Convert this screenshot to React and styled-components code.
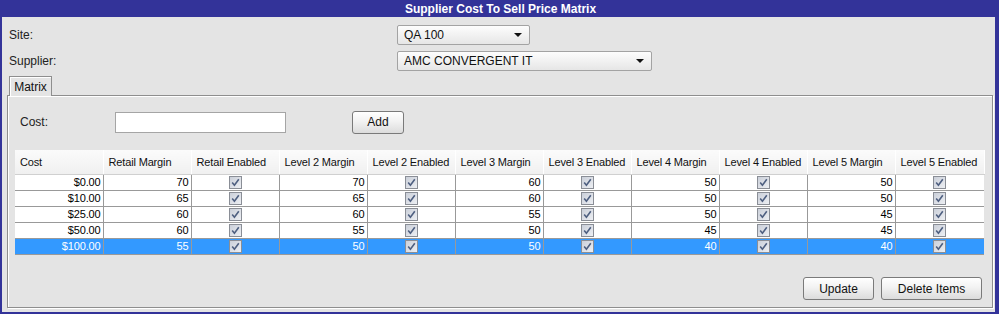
import React from "react";
import styled, { createGlobalStyle } from "styled-components";

const Global = createGlobalStyle`
  html, body { margin: 0; padding: 0; background: #e4e4e4; }
  * { box-sizing: border-box; }
`;

const Frame = styled.div`
  width: 999px;
  height: 314px;
  display: flex;
  flex-direction: column;
  background: #e4e4e4;
  border-left: 2px solid #333399;
  border-right: 4px solid #333399;
  border-bottom: 2px solid #333399;
  font-family: "Liberation Sans", Arial, sans-serif;
  font-size: 12px;
  color: #222;
  overflow: hidden;
`;

const TitleBar = styled.div`
  height: 17px;
  flex: none;
  background: #333399;
  color: #fff;
  font-weight: bold;
  font-size: 12px;
  display: flex;
  align-items: center;
  justify-content: center;
  padding-left: 4px;
`;

const Form = styled.div`
  display: grid;
  grid-template-columns: 388px auto;
  row-gap: 6px;
  padding: 8px 0 0 7px;
  align-items: center;
`;

const Label = styled.div`
  color: #222;
  font-size: 12px;
`;

const Select = styled.div`
  width: ${(p) => p.$w}px;
  height: 20px;
  border: 1px solid #a3a3a3;
  border-radius: 2px;
  background: linear-gradient(#fdfdfd, #e6e6e6);
  display: flex;
  align-items: center;
  justify-content: space-between;
  padding: 0 7px 0 6px;
  color: #111;
  font-size: 12px;
`;

const Arrow = styled.span`
  width: 0;
  height: 0;
  border-left: 4px solid transparent;
  border-right: 4px solid transparent;
  border-top: 4px solid #111;
`;

const Tabs = styled.div`
  display: flex;
  padding: 5px 0 0 7px;
`;

const Tab = styled.div`
  height: 20px;
  width: 43px;
  border: 1px solid #8e8e8e;
  border-bottom: none;
  box-shadow: inset 1px 1px 0 #fff;
  background: #e4e4e4;
  display: flex;
  align-items: center;
  justify-content: center;
  font-size: 12px;
  color: #111;
  position: relative;
  z-index: 1;
  margin-bottom: -1px;
`;

const Panel = styled.div`
  margin: 0 2px 4px 5px;
  flex: 1;
  border: 1px solid #8e8e8e;
  box-shadow: inset 1px 1px 0 #fff, 1px 1px 0 #fff;
  display: flex;
  flex-direction: column;
  padding: 15px 8px 7px 7px;
`;

const CostRow = styled.div`
  display: flex;
  align-items: center;
  height: 22px;
`;

const CostLabel = styled.div`
  width: 100px;
  padding-left: 5px;
  font-size: 12px;
  color: #222;
`;

const Input = styled.div`
  width: 171px;
  height: 21px;
  background: #fff;
  border: 1px solid #a5a5a5;
`;

const Button = styled.div`
  width: ${(p) => p.$w}px;
  height: ${(p) => p.$h || 23}px;
  margin-left: ${(p) => p.$ml || 0}px;
  border: 1px solid #7a7a7a;
  border-radius: 3px;
  background: linear-gradient(#ffffff, #f2f2f2 45%, #dcdcdc);
  display: flex;
  align-items: center;
  justify-content: center;
  font-size: 12px;
  color: #111;
`;

const Table = styled.table`
  margin-top: 17px;
  width: 968px;
  border-collapse: collapse;
  table-layout: fixed;
  font-family: "Liberation Sans", Tahoma, sans-serif;
  font-size: 11px;
  letter-spacing: -0.15px;
`;

const Th = styled.th`
  height: 24px;
  padding: 0 0 0 5px;
  text-align: left;
  font-weight: normal;
  color: #111;
  background: linear-gradient(#fbfbfb, #f0f0f0);
  border-right: 1px solid #fff;
  border-bottom: 1px solid #d0d0d0;
  white-space: nowrap;
  overflow: hidden;
`;

const Tr = styled.tr`
  background: ${(p) => (p.$sel ? "#3399ff" : "#fff")};
  color: ${(p) => (p.$sel ? "#fff" : "#000")};
`;

const Td = styled.td`
  height: 16px;
  padding: 0 2px 0 0;
  text-align: ${(p) => (p.$center ? "center" : "right")};
  border-right: 1px solid #999;
  border-bottom: 1px solid #999;
  line-height: 14px;
  vertical-align: middle;
  &:last-child { border-right: none; }
`;

const CheckWrap = styled.span`
  display: inline-flex;
  vertical-align: middle;
  margin-left: 2px;
`;

const Footer = styled.div`
  margin-top: auto;
  display: flex;
  justify-content: flex-end;
  padding-right: 2px;
`;

const Check = () => (
  <CheckWrap>
    <svg width="13" height="13" viewBox="0 0 13 13">
      <defs>
        <linearGradient id="cbg" x1="0" y1="0" x2="1" y2="1">
          <stop offset="0" stopColor="#c9ced8" />
          <stop offset="1" stopColor="#eef0f4" />
        </linearGradient>
      </defs>
      <rect x="0.5" y="0.5" width="12" height="12" fill="url(#cbg)" stroke="#8a8e96" />
      <path d="M3.2 6.6 L5.4 9.2 L9.8 3.2" fill="none" stroke="#4e5f80" strokeWidth="1.6" />
    </svg>
  </CheckWrap>
);

const headers = [
  "Cost",
  "Retail Margin",
  "Retail Enabled",
  "Level 2 Margin",
  "Level 2 Enabled",
  "Level 3 Margin",
  "Level 3 Enabled",
  "Level 4 Margin",
  "Level 4 Enabled",
  "Level 5 Margin",
  "Level 5 Enabled",
];

const rows = [
  ["$0.00", 70, 70, 60, 50, 50],
  ["$10.00", 65, 65, 60, 50, 50],
  ["$25.00", 60, 60, 55, 50, 45],
  ["$50.00", 60, 55, 50, 45, 45],
  ["$100.00", 55, 50, 50, 40, 40],
];

export default function App() {
  return (
    <>
      <Global />
      <Frame>
        <TitleBar>Supplier Cost To Sell Price Matrix</TitleBar>
        <Form>
          <Label>Site:</Label>
          <Select $w={133}>
            <span>QA 100</span>
            <Arrow />
          </Select>
          <Label>Supplier:</Label>
          <Select $w={255}>
            <span>AMC CONVERGENT IT</span>
            <Arrow />
          </Select>
        </Form>
        <Tabs>
          <Tab>Matrix</Tab>
        </Tabs>
        <Panel>
          <CostRow>
            <CostLabel>Cost:</CostLabel>
            <Input />
            <Button $w={52} $ml={66}>Add</Button>
          </CostRow>
          <Table>
            <colgroup>
              {headers.map((h, i) => (
                <col key={h} style={{ width: i === 10 ? 89 : 88 }} />
              ))}
            </colgroup>
            <thead>
              <tr>
                {headers.map((h) => (
                  <Th key={h}>{h}</Th>
                ))}
              </tr>
            </thead>
            <tbody>
              {rows.map((r, i) => (
                <Tr key={r[0]} $sel={i === rows.length - 1}>
                  <Td>{r[0]}</Td>
                  {r.slice(1).map((v, j) => (
                    <React.Fragment key={j}>
                      <Td>{v}</Td>
                      <Td $center>
                        <Check />
                      </Td>
                    </React.Fragment>
                  ))}
                </Tr>
              ))}
            </tbody>
          </Table>
          <Footer>
            <Button $w={71}>Update</Button>
            <Button $w={101} $ml={7}>Delete Items</Button>
          </Footer>
        </Panel>
      </Frame>
    </>
  );
}
